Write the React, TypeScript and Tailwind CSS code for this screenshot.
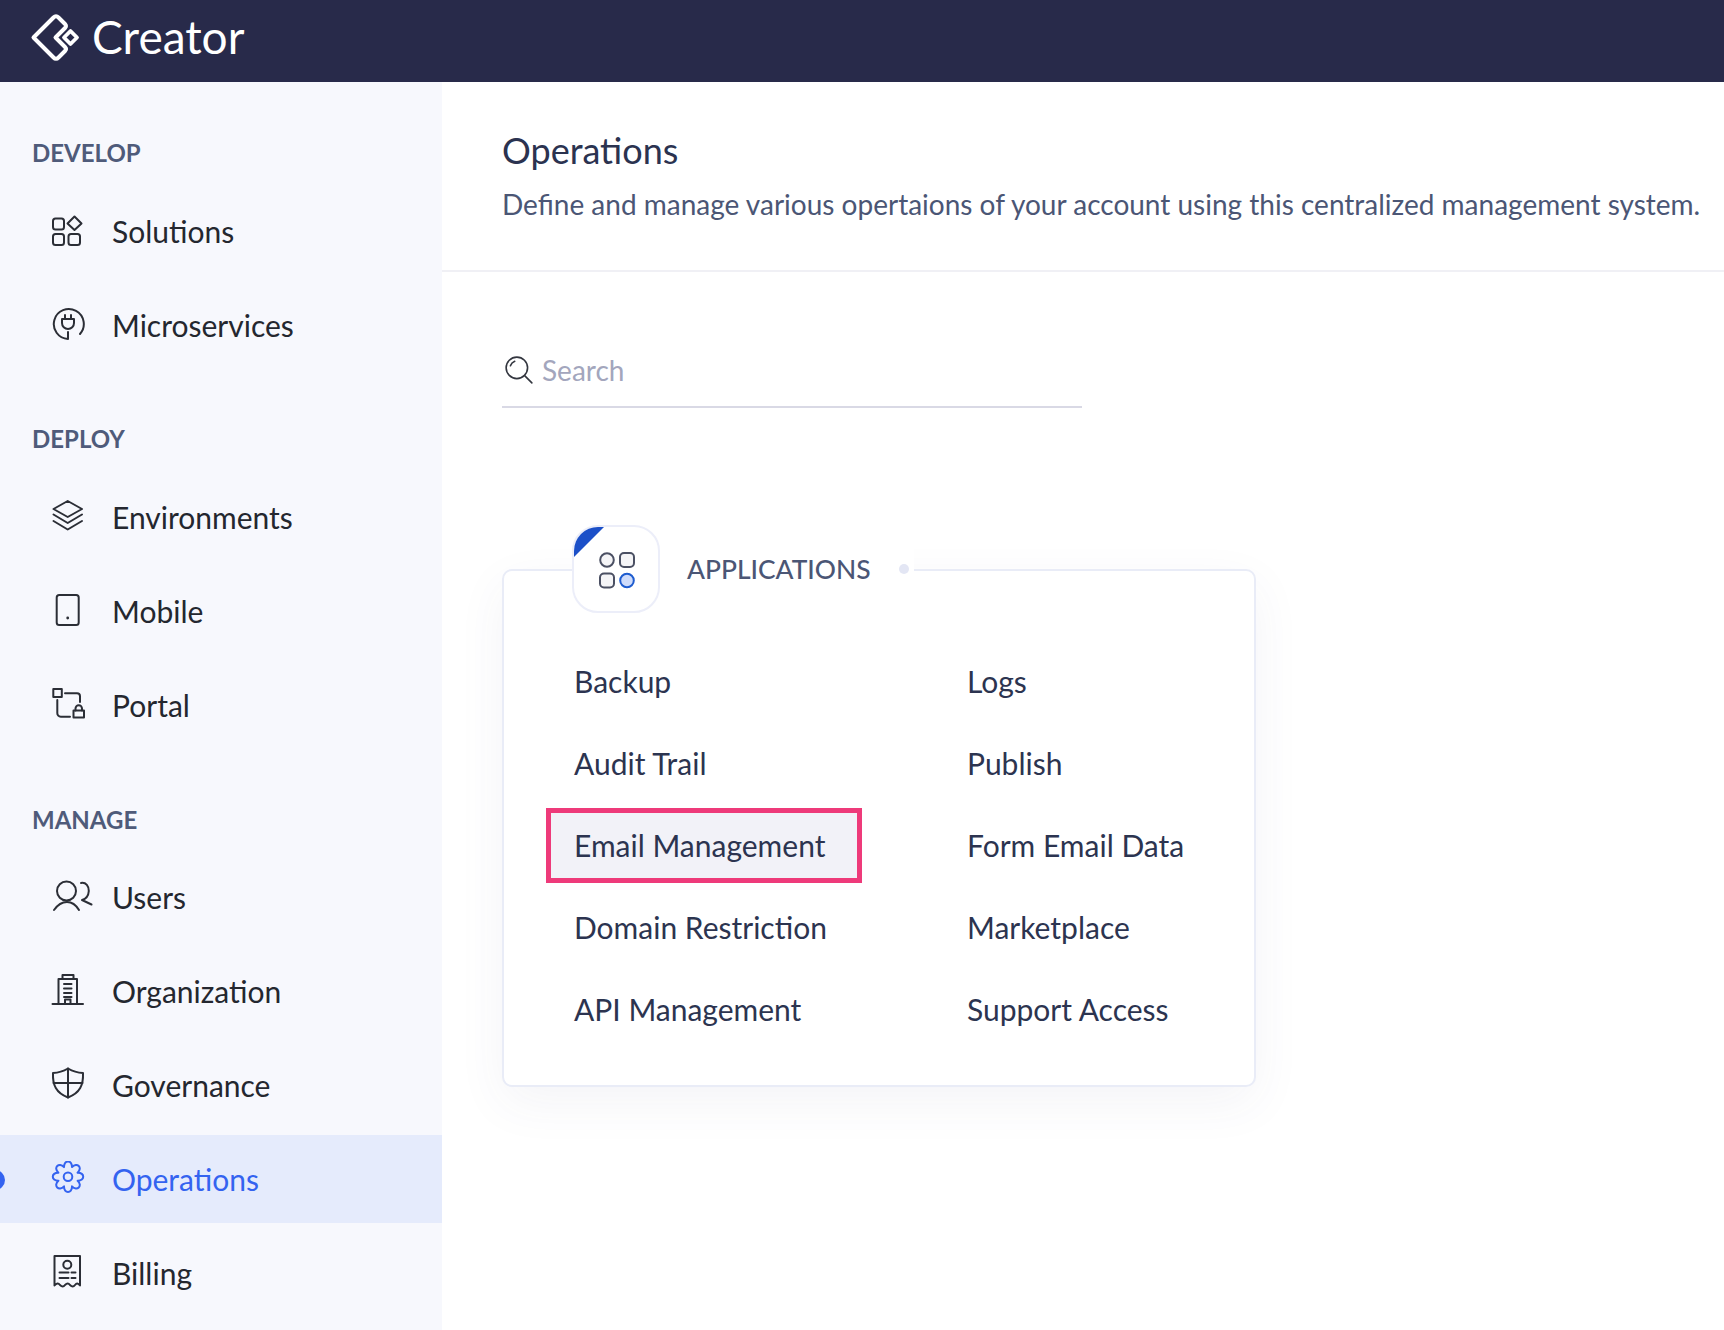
import React from "react";

const gearPath = (() => {
  const cx = 18, cy = 15.7, rv = 10.4, rc = 17.6;
  const pt = (r: number, deg: number) => {
    const t = (deg * Math.PI) / 180;
    return `${(cx + r * Math.cos(t)).toFixed(2)} ${(cy + r * Math.sin(t)).toFixed(2)}`;
  };
  let d = `M${pt(rv, -90 - 22.5)}`;
  for (let i = 0; i < 8; i++) {
    const a = -90 + i * 45;
    d += ` C${pt(rc, a - 14)} ${pt(rc, a + 14)} ${pt(rv, a + 22.5)}`;
  }
  return d + " Z";
})();

const Ic = ({ children, color = "#2b2e36" }: { children: React.ReactNode; color?: string }) => (
  <svg viewBox="0 0 44 36" width="44" height="36" fill="none" stroke={color} strokeWidth="2" strokeLinecap="round" strokeLinejoin="round" className="shrink-0">
    {children}
  </svg>
);

const icons: Record<string, React.ReactNode> = {
  Solutions: (
    <Ic>
      <rect x="3" y="5.5" width="11" height="11" rx="2.5" />
      <rect x="3" y="21" width="11" height="11" rx="2.5" />
      <rect x="18.5" y="21" width="11.5" height="11" rx="2.5" />
      <path d="M24.5 3.5 L31.5 10.5 L24.5 17 L17.5 10.5 Z" />
    </Ic>
  ),
  Microservices: (
    <Ic>
      <path d="M30 27 A15 15 0 1 0 18 32 V25" />
      <path d="M12 12 H24 V16 A6 6 0 0 1 12 16 Z" />
      <path d="M15 8 V12 M21 8 V12" />
    </Ic>
  ),
  Environments: (
    <Ic>
      <path d="M17.7 2 L32 10 L17.7 18 L3.500 10 Z" />
      <path d="M3.500 15.500 L17.7 24 L32 15.500" />
      <path d="M3.500 22 L17.7 30.500 L32 22" />
    </Ic>
  ),
  Mobile: (
    <Ic>
      <rect x="6.7" y="2" width="22" height="30" rx="2.500" />
      <circle cx="17.7" cy="25" r="1.400" fill="#2b2e36" stroke="none" />
    </Ic>
  ),
  Portal: (
    <Ic>
      <rect x="3.300" y="2" width="8.500" height="8" />
      <path d="M15 6.300 H27 A3 3 0 0 1 30 9.300 V15" />
      <path d="M7.300 13 V26 A3.500 3.500 0 0 0 10.800 29.700 H20" />
      <rect x="23.500" y="23.500" width="10.500" height="7" />
      <path d="M25.500 23.500 V21.500 A3.200 3.200 0 0 1 32 21.500 V23.500" />
    </Ic>
  ),
  Users: (
    <Ic>
      <circle cx="16.500" cy="12" r="9.500" />
      <path d="M4 31 C7.500 26 11.500 23 17 23 C22.500 23 26 26 29 31" />
      <path d="M31 4 C36 3 39 7.500 38.800 12 C38.500 16.500 36 20 32 21 L41.500 25.500" />
    </Ic>
  ),
  Organization: (
    <Ic>
      <path d="M2.500 31 H33" />
      <path d="M8.500 31 V6 H27 V31" />
      <path d="M12.500 6 V2 H23.500 V6" />
      <path d="M14 11 H21.500 M14 15.500 H21.500 M14 20 H21.500 M14 24 H21.500" />
      <path d="M15 31 V26.500 H20.500 V31" />
    </Ic>
  ),
  Governance: (
    <Ic>
      <path d="M18 1.500 C23 4.500 28 5.800 33 6 C33.500 18 30 26 18 30.500 C6 26 2.500 18 3 6 C8 5.800 13 4.500 18 1.500 Z" />
      <path d="M18 1.500 V30.500 M3.500 16 H32.500" />
    </Ic>
  ),
  Operations: (
    <Ic color="#3463f0">
      <path d={gearPath} />
      <circle cx="18" cy="15.7" r="4.300" />
    </Ic>
  ),
  Billing: (
    <Ic>
      <path d="M4.500 1 H30 V30.500 C28 28 26.500 28 25 30 C23.500 32 22 32 20 30 C18.500 28 17 28 15 30 C13.500 32 12 32 10 30 C8.500 28 6.500 28 4.500 30.500 Z" />
      <circle cx="17.300" cy="9.800" r="4" />
      <path d="M9.500 17.500 H18.500 M21.500 17.500 H25.500 M9.500 23 H18.500 M21.500 23 H25.500" />
    </Ic>
  ),
};

const NavRow = ({ label, active }: { label: string; active?: boolean }) => (
  <div className={`relative h-[88px] flex items-center pl-[50px] ${active ? "bg-[#e5ebfc] text-[#3463f0]" : "text-[#24272f]"}`}>
    {active && <span className="absolute -left-[15px] top-[35px] w-[20px] h-[20px] rounded-full bg-[#3463f0]" />}
    <span className="flex">{icons[label]}</span>
    <span className="ml-[18px] text-[30px] leading-[40px]">{label}</span>
  </div>
);

const Section = ({ title, items, className, labelClass }: { title: string; items: string[]; className?: string; labelClass: string }) => (
  <div className={className}>
    <div className={`h-[32px] pl-[32px] text-[24px] leading-[32px] font-bold text-[#4f5b7a] ${labelClass}`}>{title}</div>
    <div className="flex flex-col gap-[6px]">
      {items.map((i) => (
        <NavRow key={i} label={i} active={i === "Operations"} />
      ))}
    </div>
  </div>
);

const col1 = ["Backup", "Audit Trail", "Email Management", "Domain Restriction", "API Management"];
const col2 = ["Logs", "Publish", "Form Email Data", "Marketplace", "Support Access"];

export default function App() {
  return (
    <div className="h-[1330px] w-full overflow-hidden bg-white flex flex-col font-['Lato',sans-serif]">
      <header className="h-[82px] shrink-0 bg-[#282a4a] flex items-center pl-[30px] pb-[8px]">
        <svg viewBox="0 0 56 56" width="56" height="56" fill="none" stroke="#fff" strokeLinejoin="round" strokeLinecap="round" className="shrink-0">
          <path d="M3.500 28.500 L23.500 8.500 Q26 6 28.500 8.500 L35 15 Q37 17 35 19 L25.500 28.500 L35 38 Q37 40 35 42 L28.500 48.500 Q26 51 23.500 48.500 Z" strokeWidth="4" />
          <path d="M40.500 22 L47 28.500 L40.500 35 L34 28.500 Z" strokeWidth="3.800" />
        </svg>
        <span className="ml-[6px] text-[46px] leading-[56px] text-white">Creator</span>
      </header>
      <div className="flex-1 flex min-h-0">
        <aside className="w-[442px] shrink-0 bg-[#f7f8fd] pt-[55px]">
          <Section labelClass="mb-[18px]" title="DEVELOP" items={["Solutions", "Microservices"]} />
          <Section labelClass="mb-[18px]" className="mt-[54px]" title="DEPLOY" items={["Environments", "Mobile", "Portal"]} />
          <Section labelClass="mb-[17px]" className="mt-[55px]" title="MANAGE" items={["Users", "Organization", "Governance", "Operations", "Billing"]} />
        </aside>
        <main className="flex-1 min-w-0">
          <div className="h-[190px] border-b-2 border-[#f0f0f5] pl-[60px] pt-[48px]">
            <h1 className="text-[36px] leading-[40px] text-[#2b3350]">Operations</h1>
            <p className="mt-[16px] text-[28px] leading-[36px] text-[#4b5675] whitespace-nowrap">
              Define and manage various opertaions of your account using this centralized management system.
            </p>
          </div>
          <div className="pl-[60px]">
            <div className="mt-[67px] w-[580px] h-[69px] border-b-2 border-[#d9d9e5] flex items-center pb-[6px]">
              <svg viewBox="0 0 28 28" width="30" height="30" fill="none" stroke="#33363f" strokeWidth="1.500" strokeLinecap="round" className="ml-[2px] shrink-0">
                <circle cx="12" cy="12" r="10" />
                <path d="M19.500 19.500 L26 26" />
                <path d="M6 10 A7 7 0 0 1 10 5.800" />
              </svg>
              <span className="ml-[8px] text-[28px] leading-[36px] text-[#a3a6bd]">Search</span>
            </div>
            <div className="relative mt-[161px] w-[754px] h-[518px] bg-white border-2 border-[#e9ecf7] rounded-[10px] shadow-[0_16px_50px_rgba(60,70,120,0.06)]">
              <div className="absolute -top-[46px] left-[68px] w-[88px] h-[88px] bg-white border-2 border-[#eceef9] rounded-[26px] overflow-hidden">
                <svg viewBox="0 0 84 84" width="84" height="84" className="absolute inset-0" strokeWidth="2">
                  <path d="M0 0 H30 L0 30 Z" fill="#1c50c8" />
                  <circle cx="33" cy="33" r="6.800" fill="#f5f5f7" stroke="#4b5063" />
                  <rect x="46" y="26" width="14" height="14" rx="4" fill="#f5f5f7" stroke="#4b5063" />
                  <rect x="26" y="46.500" width="14" height="14" rx="4" fill="#f5f5f7" stroke="#4b5063" />
                  <circle cx="53" cy="53.500" r="6.800" fill="#cfdcfb" stroke="#1e5ccf" />
                </svg>
              </div>
              <div className="absolute -top-[23px] left-[156px] h-[42px] bg-white flex items-center pl-[27px] pr-[5px]">
                <span className="text-[26.4px] leading-[36px] font-medium text-[#4b5675]">APPLICATIONS</span>
                <span className="ml-[28px] w-[10px] h-[10px] rounded-full bg-[#e3e6f4]" />
              </div>
              <div className="grid grid-cols-[393px_1fr] pt-[69px] pl-[70px] text-[30px] leading-[40px] text-[#2c3450]">
                <div className="flex flex-col">
                  {col1.map((t) =>
                    t === "Email Management" ? (
                      <div key={t} className="h-[82px] flex items-center">
                        <div className="-ml-[28px] w-[316px] h-[75px] pl-[23px] border-[5px] border-[#ee3a7a] bg-[#f2f2f8] flex items-center">{t}</div>
                      </div>
                    ) : (
                      <div key={t} className="h-[82px] flex items-center">{t}</div>
                    )
                  )}
                </div>
                <div className="flex flex-col">
                  {col2.map((t) => (
                    <div key={t} className="h-[82px] flex items-center">{t}</div>
                  ))}
                </div>
              </div>
            </div>
          </div>
        </main>
      </div>
    </div>
  );
}
